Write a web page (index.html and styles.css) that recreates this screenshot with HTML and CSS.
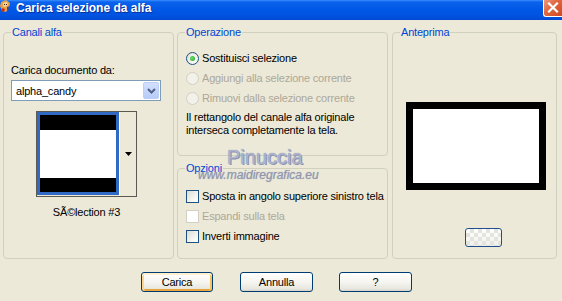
FILE: index.html
```html
<!DOCTYPE html>
<html lang="it">
<head>
<meta charset="utf-8">
<title>Carica selezione da alfa</title>
<link rel="stylesheet" href="styles.css">
</head>
<body>
<div class="titlebar">
  <svg class="app-icon" width="11" height="15" viewBox="0 0 11 15">
    <path d="M1 2 L6 0 L10 3 L9 8 L6 12 L2 11 L0 6 Z" fill="#E8A048"/>
    <path d="M3 3 L7 2 L8 5 L5 7 L3 6 Z" fill="#F6D7A0"/>
    <path d="M2 8 L5 9 L4 12 L1 11 Z" fill="#C83018"/>
    <path d="M7 7 L10 6 L9 10 L7 10 Z" fill="#3050B0"/>
    <path d="M4 4 L5 4 L5 5 L4 5 Z M6 4 L7 4 L7 5 L6 5 Z" fill="#402010"/>
  </svg>
  <span class="title">Carica selezione da alfa</span>
  <div class="close">
    <svg width="17" height="16" viewBox="0 0 17 16">
      <path d="M4 3.5 L12 11.5 M12 3.5 L4 11.5" stroke="#fff" stroke-width="2.2" stroke-linecap="square"/>
    </svg>
  </div>
</div>

<div class="columns">
  <fieldset class="group g-left">
    <legend>Canali alfa</legend>
    <div class="inner-left">
      <div class="lbl">Carica documento da:</div>
      <div class="select">
        <span class="select-text">alpha_candy</span>
        <span class="select-btn">
          <svg width="9" height="6" viewBox="0 0 9 6"><path d="M1 1 L4.5 4.5 L8 1" fill="none" stroke="#4D6185" stroke-width="2"/></svg>
        </span>
      </div>
      <div class="thumbwrap">
        <div class="thumb">
          <div class="band-black top"></div>
          <div class="band-white"></div>
          <div class="band-black bottom"></div>
        </div>
        <div class="thumb-btn">
          <svg width="7" height="4" viewBox="0 0 7 4"><path d="M0 0 H7 L3.5 4 Z" fill="#000"/></svg>
        </div>
      </div>
      <div class="caption">SÃ©lection #3</div>
    </div>
  </fieldset>

  <div class="mid">
    <fieldset class="group g-op">
      <legend>Operazione</legend>
      <div class="inner-mid">
        <div class="row"><span class="radio checked"></span><span class="opt">Sostituisci selezione</span></div>
        <div class="row disabled"><span class="radio"></span><span class="opt">Aggiungi alla selezione corrente</span></div>
        <div class="row disabled"><span class="radio"></span><span class="opt">Rimuovi dalla selezione corrente</span></div>
        <p class="note">Il rettangolo del canale alfa originale<br>interseca completamente la tela.</p>
      </div>
    </fieldset>
    <fieldset class="group g-opt">
      <legend>Opzioni</legend>
      <div class="inner-opt">
        <div class="row"><span class="check"></span><span class="opt">Sposta in angolo superiore sinistro tela</span></div>
        <div class="row disabled"><span class="check"></span><span class="opt">Espandi sulla tela</span></div>
        <div class="row"><span class="check"></span><span class="opt">Inverti immagine</span></div>
      </div>
    </fieldset>
  </div>

  <fieldset class="group g-prev">
    <legend>Anteprima</legend>
    <div class="inner-prev">
      <div class="preview"></div>
      <div class="mini-btn"></div>
    </div>
  </fieldset>
</div>

<div class="buttons">
  <button class="btn btn-default">Carica</button>
  <button class="btn">Annulla</button>
  <button class="btn">?</button>
</div>

<div class="wm-name">Pinuccia</div>
<div class="wm-url">www.maidiregrafica.eu</div>
</body>
</html>
```

FILE: styles.css
```css
* { box-sizing: border-box; }
html, body { margin: 0; padding: 0; }
body {
  width: 562px;
  height: 301px;
  overflow: hidden;
  position: relative;
  background: #ECE9D8;
  font-family: "Liberation Sans", Arial, sans-serif;
  font-size: 11px;
  letter-spacing: -0.2px;
  color: #000;
}

/* Title bar */
.titlebar {
  height: 20px;
  display: flex;
  align-items: flex-start;
  background: linear-gradient(#3C8EFF 0, #0A62EC 2px, #0058E6 45%, #0052DF 80%, #0049D4 100%);
}
.app-icon { margin: 0 5px 0 0; }
.title {
  color: #fff;
  font-weight: bold;
  font-size: 12px;
  letter-spacing: 0;
  line-height: 16px;
  text-shadow: 1px 1px 0 #0B2E9A;
}
.close {
  margin-left: auto;
  width: 19px;
  height: 17px;
  border-left: 1px solid #fff;
  border-bottom: 1px solid #fff;
  border-bottom-left-radius: 3px;
  background: linear-gradient(135deg, #EE9A7E 0, #E06A43 40%, #D2461E 100%);
  display: flex;
  align-items: center;
  justify-content: center;
}

/* Columns */
.columns {
  display: flex;
  align-items: flex-start;
  margin: 6px 0 0 3px;
}
.group {
  margin: 0;
  padding: 0;
  min-width: 0;
  border: 1px solid #D0D0BF;
  border-radius: 4px;
}
.group legend {
  color: #0046D5;
  padding: 0 1px;
  margin-left: 7px;
  line-height: 13px;
  font-size: 11px;
}
.g-left { width: 171px; height: 233px; }
.mid { width: 211px; margin-left: 3px; display: flex; flex-direction: column; }
.g-op { height: 130px; }
.g-opt { height: 97px; margin-top: 6px; }
.g-prev { width: 165px; height: 233px; margin-left: 4px; }

/* Left group */
.inner-left { padding: 25px 0 0 7px; }
.lbl { line-height: 13px; }
.select {
  margin-top: 3px;
  width: 150px;
  height: 21px;
  background: #fff;
  border: 1px solid #7F9DB9;
  display: flex;
  align-items: center;
  padding: 1px;
}
.select-text { flex: 1; padding-left: 3px; }
.select-btn {
  width: 16px;
  height: 17px;
  border: 1px solid #BCCDF6;
  border-radius: 2px;
  background: linear-gradient(#D4E0FD, #B6CBF9);
  display: flex;
  align-items: center;
  justify-content: center;
}
.thumbwrap {
  margin: 10px 0 0 25px;
  width: 101px;
  height: 86px;
  border: 1px solid #5A5A52;
  display: flex;
}
.thumb {
  width: 82px;
  height: 83px;
  border: 3px solid #316AC5;
  display: flex;
  flex-direction: column;
}
.band-black { background: #000; }
.band-black.top { height: 15px; }
.band-black.bottom { height: 14px; }
.band-white { flex: 1; background: #fff; }
.thumb-btn {
  flex: 1;
  border-left: 1px solid #fff;
  background: #ECE9D8;
  display: flex;
  align-items: center;
  justify-content: center;
}
.caption {
  margin: 9px 0 0 25px;
  width: 101px;
  text-align: center;
  line-height: 13px;
}

/* Middle groups */
.inner-mid { padding: 9px 0 0 8px; }
.inner-opt { padding: 11px 0 0 8px; }
.row {
  height: 20px;
  display: flex;
  align-items: center;
}
.row .opt { margin-left: 3px; }
.row.disabled { color: #ACA899; }
.radio {
  width: 13px;
  height: 13px;
  border-radius: 50%;
  border: 1px solid #1C5180;
  background: radial-gradient(circle at 65% 65%, #FFFFFF 0, #F4F4F0 40%, #D8D8D2 100%);
  position: relative;
  flex: none;
}
.radio.checked::after {
  content: "";
  position: absolute;
  left: 3px;
  top: 3px;
  width: 5px;
  height: 5px;
  border-radius: 50%;
  background: radial-gradient(circle at 40% 40%, #6CE06A, #21A121);
}
.row.disabled .radio { border-color: #D2D0C4; background: #F2F1EA; }
.check {
  width: 13px;
  height: 13px;
  border: 1px solid #1C5180;
  background: linear-gradient(135deg, #DCDCD7 0, #F4F4F0 60%, #FFFFFF 100%);
  flex: none;
}
.row.disabled .check { border-color: #D2D0C4; background: #FFFFFF; }
.note { margin: 3px 0 0; line-height: 13px; }

/* Preview group */
.inner-prev { padding: 63px 0 0 13px; }
.preview {
  width: 140px;
  height: 88px;
  border: 7px solid #000;
  background: #fff;
}
.mini-btn {
  margin: 38px 0 0 59px;
  width: 37px;
  height: 19px;
  border: 1px solid #1E4E8C;
  border-radius: 3px;
  background:
    linear-gradient(45deg, #E4E4DE 25%, transparent 25%, transparent 75%, #E4E4DE 75%),
    linear-gradient(45deg, #E4E4DE 25%, transparent 25%, transparent 75%, #E4E4DE 75%),
    linear-gradient(#FFFFFF, #F1F0EA);
  background-size: 8px 8px, 8px 8px, 100% 100%;
  background-position: 0 0, 4px 4px, 0 0;
}

/* Buttons */
.buttons {
  display: flex;
  gap: 26px;
  margin: 13px 0 0 141px;
}
.btn {
  width: 73px;
  height: 20px;
  padding: 0;
  border: 1px solid #003C74;
  border-radius: 3px;
  background: linear-gradient(#FFFFFF 0, #F6F5F0 50%, #E6E5DE 90%, #D6D0C5 100%);
  font-family: inherit;
  font-size: 11px;
  letter-spacing: -0.2px;
  color: #000;
}
.btn-default {
  width: 72px;
  margin-right: 1px;
  box-shadow: inset 0 2px 0 #FFF0CF, inset 2px 0 0 #FBD78E, inset -2px 0 0 #F7C45C, inset 0 -2px 0 #E9A53A;
}

/* Watermark overlay */
.wm-name {
  position: absolute;
  left: 227px;
  top: 147px;
  font-size: 20px;
  line-height: 20px;
  letter-spacing: 0;
  color: #AEB4CE;
  text-shadow: 0 0 1px #7F87A8, 1px 1px 0 #8E95B2;
}
.wm-url {
  position: absolute;
  left: 198px;
  top: 169px;
  font-size: 12px;
  line-height: 12px;
  letter-spacing: 0;
  font-style: italic;
  color: #9096AE;
  text-shadow: 0 0 1px #A6ABC0;
}
```
